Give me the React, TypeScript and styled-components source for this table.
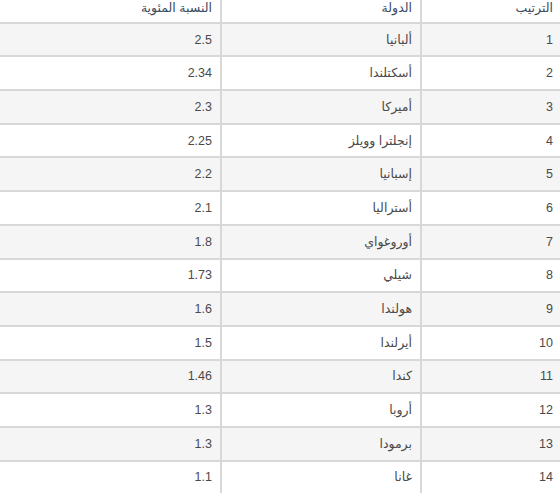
import React from 'react';
import styled, { createGlobalStyle } from 'styled-components';

const GlobalStyle = createGlobalStyle`
  html, body {
    margin: 0;
    padding: 0;
    background: #fff;
  }
`;

const Viewport = styled.div`
  width: 560px;
  height: 493px;
  overflow: hidden;
  direction: rtl;
`;

const Table = styled.table`
  direction: rtl;
  border-collapse: collapse;
  table-layout: fixed;
  width: 602px;
  margin: -12px -3px 0 -39px;
  font-family: "Liberation Sans", "DejaVu Sans", sans-serif;
  font-size: 12.5px;
  color: #4a4a4a;
`;

const Row = styled.tr<{ striped?: boolean }>`
  background: ${p => (p.striped ? '#f5f5f5' : '#fff')};
`;

const Cell = styled.td`
  border: 2px solid #d8d8d8;
  height: 33.7px;
  box-sizing: border-box;
  padding: 0 8px;
  text-align: right;
  vertical-align: middle;
  line-height: 16px;
`;

const HeadCell = styled(Cell).attrs({ as: 'th' })`
  font-weight: normal;
  color: #3a4a60;
  padding-top: 5px;
`;

const rows: [string, string][] = [
  ['ألبانيا', '2.5'],
  ['أسكتلندا', '2.34'],
  ['أميركا', '2.3'],
  ['إنجلترا وويلز', '2.25'],
  ['إسبانيا', '2.2'],
  ['أستراليا', '2.1'],
  ['أوروغواي', '1.8'],
  ['شيلي', '1.73'],
  ['هولندا', '1.6'],
  ['أيرلندا', '1.5'],
  ['كندا', '1.46'],
  ['أروبا', '1.3'],
  ['برمودا', '1.3'],
  ['غانا', '1.1'],
];

const App: React.FC = () => {
  return (
    <Viewport>
      <GlobalStyle />
      <Table>
        <colgroup>
          <col style={{ width: 141 }} />
          <col style={{ width: 200 }} />
          <col style={{ width: 261 }} />
        </colgroup>
        <thead>
          <tr>
            <HeadCell>الترتيب</HeadCell>
            <HeadCell>الدولة</HeadCell>
            <HeadCell>النسبة المئوية</HeadCell>
          </tr>
        </thead>
        <tbody>
          {rows.map(([country, pct], i) => (
            <Row key={i} striped={i % 2 === 0}>
              <Cell>{i + 1}</Cell>
              <Cell>{country}</Cell>
              <Cell>{pct}</Cell>
            </Row>
          ))}
        </tbody>
      </Table>
    </Viewport>
  );
};

export default App;
